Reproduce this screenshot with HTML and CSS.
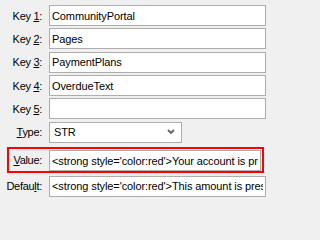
FILE: index.html
```html
<!DOCTYPE html>
<html>
<head>
<meta charset="utf-8">
<link rel="stylesheet" href="styles.css">
</head>
<body>
<div class="form">
  <div class="field">
    <label class="label">Key <u>1</u>:</label>
    <input class="text" type="text" value="CommunityPortal">
  </div>
  <div class="field">
    <label class="label">Key <u>2</u>:</label>
    <input class="text" type="text" value="Pages">
  </div>
  <div class="field">
    <label class="label">Key <u>3</u>:</label>
    <input class="text" type="text" value="PaymentPlans">
  </div>
  <div class="field">
    <label class="label">Key <u>4</u>:</label>
    <input class="text" type="text" value="OverdueText">
  </div>
  <div class="field">
    <label class="label">Key <u>5</u>:</label>
    <input class="text" type="text" value="">
  </div>
  <div class="field">
    <label class="label"><u>T</u>ype:</label>
    <div class="select">
      <span class="select-value">STR</span>
      <svg class="chevron" width="8" height="6" viewBox="0 0 8 6"><polyline points="1,1 4,4 7,1" fill="none" stroke="#606060" stroke-width="1.8"/></svg>
    </div>
  </div>
  <div class="field field-highlight">
    <label class="label"><u>V</u>alue:</label>
    <input class="text" type="text" value="&lt;strong style='color:red'&gt;Your account is presently past due.&lt;/strong&gt;">
  </div>
  <div class="field field-default">
    <label class="label">Defau<u>l</u>t:</label>
    <input class="text" type="text" value="&lt;strong style='color:red'&gt;This amount is presently past due.&lt;/strong&gt;">
  </div>
</div>
</body>
</html>
```

FILE: styles.css
```css
html, body {
  margin: 0;
  padding: 0;
  background: #f0f0f0;
}

body {
  width: 271px;
  height: 202px;
  overflow: hidden;
  font-family: "Liberation Sans", Arial, sans-serif;
  font-size: 11px;
  color: #000;
}

.form {
  display: flex;
  flex-direction: column;
  gap: 2.35px;
  padding: 5px 5px 0 0;
}

.field {
  display: grid;
  grid-template-columns: 45px 1fr;
  column-gap: 4px;
  align-items: center;
  height: 21px;
}

.label {
  text-align: right;
  padding-right: 3px;
  letter-spacing: -0.3px;
  white-space: nowrap;
}

.label u {
  text-underline-offset: 1px;
}

.text {
  box-sizing: border-box;
  height: 21px;
  width: 100%;
  margin: 0;
  padding: 0 2px;
  border: 1px solid #adadad;
  background: #fff;
  font-family: inherit;
  font-size: 11px;
  letter-spacing: -0.1px;
  color: #000;
  outline: none;
}

.select {
  box-sizing: border-box;
  width: 133px;
  height: 21px;
  display: flex;
  align-items: center;
  padding: 0 6px 0 4px;
  border: 1px solid #adadad;
  background: #fff;
  letter-spacing: -0.1px;
}

.select-value {
  flex: 1;
}

.chevron {
  display: block;
}

.field-highlight {
  height: 26px;
  box-sizing: border-box;
  margin: 2px 2px 0.5px 7px;
  padding: 1px 1px 0 0;
  border: 2px solid #ff0000;
  grid-template-columns: 36px 1fr;
  align-items: start;
}

.field-highlight .label {
  line-height: 21px;
}
```
